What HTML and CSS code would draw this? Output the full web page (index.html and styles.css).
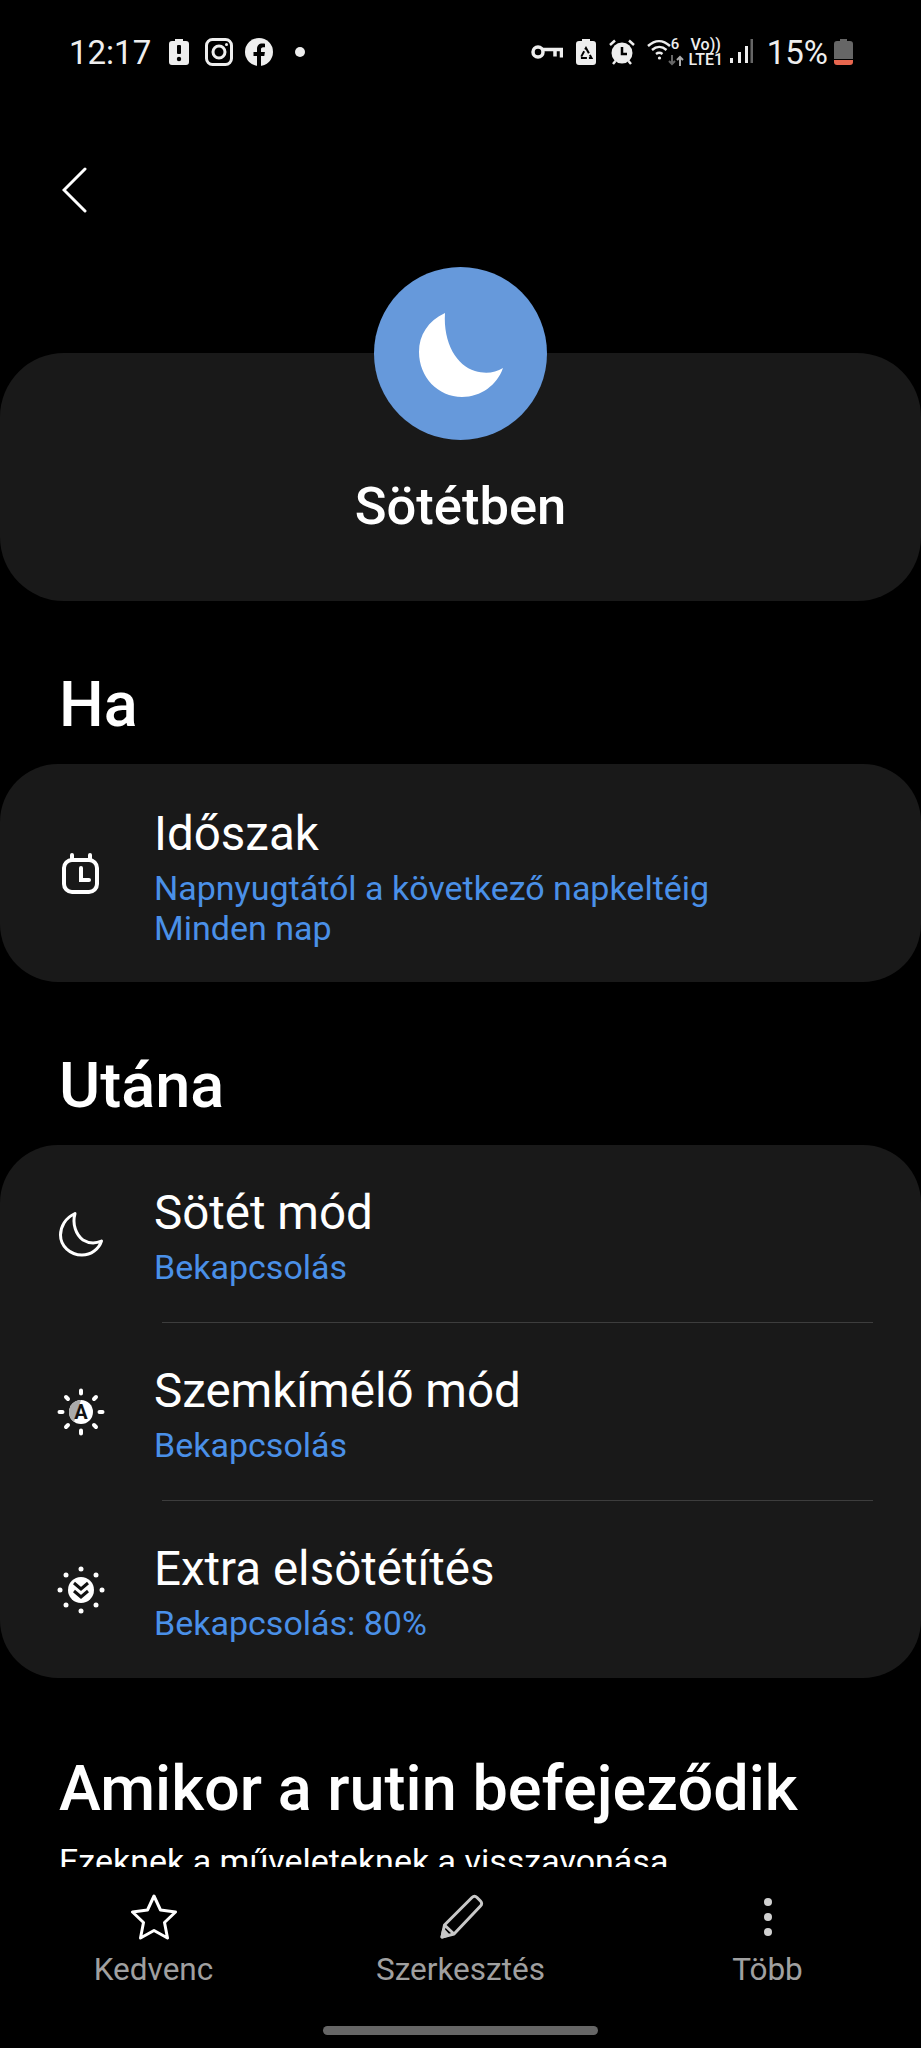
FILE: index.html
```html
<!DOCTYPE html>
<html lang="hu">
<head>
    <meta charset="UTF-8">
    <title>Sötétben</title>
    <link rel="stylesheet" href="styles.css">
</head>

<body>
<div class="phone">
    <!--status bar-->
    <div class="status">
        <div class="status-left">
            <span class="time">12:17</span>
            <svg class="ic-batt" width="20" height="26" viewBox="0 0 20 26"><path fill="#eee" d="M6 0h8v2h3a3 3 0 0 1 3 3v18a3 3 0 0 1-3 3H3a3 3 0 0 1-3-3V5a3 3 0 0 1 3-3h3z"/><rect x="8" y="6" width="4" height="9" rx="1" fill="#000"/><circle cx="10" cy="20" r="2.2" fill="#000"/></svg>
            <svg class="ic-insta" width="28" height="28" viewBox="0 0 28 28" fill="none" stroke="#eee" stroke-width="3"><rect x="1.5" y="1.5" width="25" height="25" rx="6"/><circle cx="14" cy="14" r="6"/><circle cx="21.5" cy="6.5" r="1.5" fill="#eee" stroke="none"/></svg>
            <svg class="ic-fb" width="28" height="28" viewBox="0 0 28 28"><circle cx="14" cy="14" r="14" fill="#eee"/><path fill="#000" d="M12 28V18H8.500v-4H12v-3c0-3.500 2-5.500 5.200-5.500 1.300 0 2.800.2 2.800.2v3.500h-1.700c-1.800 0-2.300 1-2.300 2.200V14h3.900l-.6 4H16v10z"/></svg>
            <span class="dot"></span>
        </div>
        <div class="status-right">
            <svg width="32" height="16" viewBox="0 0 32 16" fill="none" stroke="#eee" stroke-width="3.500"><circle cx="7" cy="8" r="5"/><path d="M12 5.500h18.500v8M24 5.500v7"/></svg>
            <svg class="ic-recycle" width="20" height="26" viewBox="0 0 20 26"><path fill="#eee" d="M6 0h8v2h3a3 3 0 0 1 3 3v18a3 3 0 0 1-3 3H3a3 3 0 0 1-3-3V5a3 3 0 0 1 3-3h3z"/><path fill="none" stroke="#000" stroke-width="2" stroke-dasharray="6 2" d="M10 9l5.500 10h-11z"/></svg>
            <svg class="ic-alarm" width="26" height="26" viewBox="0 0 26 26"><circle cx="13" cy="14" r="10.500" fill="#eee"/><path fill="none" stroke="#eee" stroke-width="2.500" d="M1 6l5-4.500M25 6l-5-4.500M4 25l2.500-3M22 25l-2.500-3"/><path fill="none" stroke="#000" stroke-width="2.500" d="M13 8v7h5"/></svg>
            <span class="wifi">
                <svg width="26" height="24" viewBox="0 0 26 24" fill="none" stroke="#eee" stroke-width="2.400"><path d="M1 9c7-6.500 15-6.500 22 0M5 13c4.500-4 10-4 14.500 0M9 17c2-1.500 4.500-1.500 6.500 0"/><circle cx="12.500" cy="21" r="1.600" fill="#eee" stroke="none"/></svg>
                <span class="wifi-six">6</span>
                <svg class="wifi-arrows" width="16" height="11" viewBox="0 0 16 11" fill="none" stroke-width="2"><path stroke="#666" d="M4 0v9M1 6l3 3 3-3"/><path stroke="#aaa" d="M12 11V2M9 5l3-3 3 3"/></svg>
            </span>
            <span class="volte"><span>Vo))</span><span>LTE1</span></span>
            <svg class="ic-signal" width="24" height="26" viewBox="0 0 24 26"><rect x="1" y="19" width="3" height="5" fill="#eee"/><rect x="9" y="13" width="3" height="11" fill="#eee"/><rect x="16" y="7" width="3" height="17" fill="#eee"/><rect x="21.500" y="0" width="2.500" height="24" fill="#666"/></svg>
            <span class="pct">15%</span>
            <svg class="ic-level" width="19" height="26" viewBox="0 0 19 26"><path fill="#666" d="M6 0h7v2h3a3 3 0 0 1 3 3v15H0V5a3 3 0 0 1 3-3h3z"/><path fill="#e8674f" d="M0 21h19v2a3 3 0 0 1-3 3H3a3 3 0 0 1-3-3z"/></svg>
        </div>
    </div>

    <div class="content">
        <div class="back">
            <svg width="26" height="46" viewBox="0 0 26 46" fill="none" stroke="#fff" stroke-width="3" stroke-linecap="round"><path d="M23 2L2 23l21 21"/></svg>
        </div>

        <div class="hero">
            <div class="hero-circle">
                <svg class="hero-moon" width="84" height="84" viewBox="0 0 84 84"><path fill="#fff" d="M26 0C9 8 0 22 0 39c0 25 19 45 43 45 19 0 35-12 41-29-8 5-18 6-28 3C38 53 24 30 26 0z"/></svg>
            </div>
            <div class="hero-title">Sötétben</div>
        </div>

        <h2 class="section-title">Ha</h2>
        <div class="card">
            <div class="row row-single">
                <svg class="row-icon" width="48" height="48" viewBox="0 0 48 48" fill="none" stroke="#fff" stroke-width="4" stroke-linecap="round"><rect x="7" y="11" width="33" height="32" rx="8"/><path d="M15 6v4M33 6v4"/><path d="M24 19v12h8"/></svg>
                <div class="row-text row-text-single">
                    <div class="row-title">Időszak</div>
                    <div class="row-sub">Napnyugtától a következő napkeltéig</div>
                    <div class="row-sub">Minden nap</div>
                </div>
            </div>
        </div>

        <h2 class="section-title section-title-2">Utána</h2>
        <div class="card">
            <div class="row">
                <svg class="row-icon" width="48" height="48" viewBox="0 0 48 48" fill="none" stroke="#fff" stroke-width="3" stroke-linejoin="round"><path d="M18 3.500C8 8 3.500 17 3.500 25c0 11 9.500 20 21.500 20 9 0 17-6 19.500-14-6.500 3-13.500 2-18.500-1C19 25 15 14 18 3.500z"/></svg>
                <div class="row-text">
                    <div class="row-title">Sötét mód</div>
                    <div class="row-sub">Bekapcsolás</div>
                </div>
            </div>
            <div class="sep"></div>
            <div class="row">
                <svg class="row-icon" width="48" height="48" viewBox="0 0 48 48"><g stroke="#fff" stroke-width="4" stroke-linecap="round"><path d="M24 2.500v3M24 42.500v3M2.500 24h3M42.500 24h3M9 9l2 2M37 37l2 2M9 39l2-2M37 11l2-2"/></g><circle cx="24" cy="24" r="12" fill="#fff"/><path fill="#aaa" d="M24 12a12 12 0 0 0-12 12 12 12 0 0 0 5 10z"/><text class="icon-letter" x="24" y="31" text-anchor="middle">A</text></svg>
                <div class="row-text">
                    <div class="row-title">Szemkímélő mód</div>
                    <div class="row-sub">Bekapcsolás</div>
                </div>
            </div>
            <div class="sep"></div>
            <div class="row">
                <svg class="row-icon" width="48" height="48" viewBox="0 0 48 48"><g fill="#fff"><circle cx="24" cy="3" r="2.500"/><circle cx="24" cy="45" r="2.500"/><circle cx="3" cy="24" r="2.500"/><circle cx="45" cy="24" r="2.500"/><circle cx="9" cy="9" r="2.500"/><circle cx="39" cy="9" r="2.500"/><circle cx="9" cy="39" r="2.500"/><circle cx="39" cy="39" r="2.500"/><circle cx="24" cy="24" r="13"/></g><path fill="none" stroke="#111" stroke-width="3" d="M17 17l7 6 7-6M17 25l7 6 7-6"/></svg>
                <div class="row-text">
                    <div class="row-title">Extra elsötétítés</div>
                    <div class="row-sub">Bekapcsolás: 80%</div>
                </div>
            </div>
        </div>

        <h2 class="section-title section-title-3">Amikor a rutin befejeződik</h2>
        <div class="section-note">Ezeknek a műveleteknek a visszavonása</div>
    </div>

    <!--bottom nav-->
    <div class="nav">
        <div class="nav-item">
            <svg width="46" height="46" viewBox="0 0 46 46" fill="none" stroke="#fff" stroke-width="3" stroke-linejoin="round"><path d="M23 2l6.500 14 15 2-11 10.500 3 15.500L23 36.500 9.500 44l3-15.500L1.500 18l15-2z"/></svg>
            <span class="nav-label">Kedvenc</span>
        </div>
        <div class="nav-item">
            <svg width="46" height="46" viewBox="0 0 46 46" fill="none" stroke="#c8c8c8" stroke-width="3" stroke-linejoin="round"><path d="M34 3.500c1.500-1.500 3.500-1.500 5 0l3.500 3.500c1.500 1.500 1.500 3.500 0 5L16 40l-12 3 2.500-12zM6.500 31L16 40"/><path fill="#c8c8c8" d="M5.500 36l4.500 5-6 2z"/></svg>
            <span class="nav-label">Szerkesztés</span>
        </div>
        <div class="nav-item">
            <svg width="46" height="46" viewBox="0 0 46 46" fill="#d0d0d0"><circle cx="23" cy="8" r="4"/><circle cx="23" cy="23" r="4"/><circle cx="23" cy="38" r="4"/></svg>
            <span class="nav-label">Több</span>
        </div>
    </div>
    <div class="handle-wrap"><div class="handle"></div></div>
</div>
</body>
</html>
```

FILE: styles.css
```css
body,
h2 {
    margin: 0;
    padding: 0;
}
body {
    background: #000;
    color: #fff;
    font-family: Roboto, "Noto Sans", sans-serif;
}
.phone {
    width: 921px;
    height: 2048px;
    overflow: hidden;
    display: flex;
    flex-direction: column;
}

/* status bar */
.status {
    height: 104px;
    flex: none;
    display: flex;
    justify-content: space-between;
    align-items: center;
    padding: 0 68px 0 69px;
    color: #eee;
}
.status-left,
.status-right {
    display: flex;
    align-items: center;
}
.time {
    font-size: 33px;
    width: 100px;
}
.ic-insta {
    margin-left: 16px;
}
.ic-fb {
    margin-left: 12px;
}
.dot {
    width: 10px;
    height: 10px;
    border-radius: 50%;
    background: #eee;
    margin-left: 22px;
}
.ic-recycle {
    margin-left: 13px;
}
.ic-alarm {
    margin-left: 13px;
}
.wifi {
    position: relative;
    width: 37px;
    height: 30px;
    margin-left: 12px;
}
.wifi-six {
    position: absolute;
    left: 24px;
    top: -2px;
    font-size: 15px;
    font-weight: 500;
}
.wifi-arrows {
    position: absolute;
    left: 21px;
    top: 18px;
}
.volte {
    display: flex;
    flex-direction: column;
    align-items: center;
    width: 34px;
    margin-left: 5px;
    font-size: 16px;
    line-height: 15px;
    font-weight: 500;
}
.ic-signal {
    margin-left: 6px;
}
.pct {
    font-size: 33px;
    margin-left: 14px;
}
.ic-level {
    margin-left: 6px;
}

/* scrolling part, cut off above the nav */
.content {
    height: 1763px;
    flex: none;
    overflow: hidden;
}
.back {
    height: 163px;
    padding: 63px 0 0 62px;
    box-sizing: border-box;
}

.hero {
    margin-top: 86px;
    height: 248px;
    background: #191919;
    border-radius: 64px;
    display: flex;
    flex-direction: column;
    align-items: center;
}
.hero-circle {
    width: 173px;
    height: 173px;
    margin-top: -86px;
    flex: none;
    border-radius: 50%;
    background: #6699db;
    display: flex;
    align-items: center;
    justify-content: center;
}
.hero-moon {
    margin-top: 2px;
}
.hero-title {
    font-size: 52.5px;
    font-weight: 500;
    margin-top: 36px;
    line-height: 60px;
}

.section-title {
    font-size: 63px;
    font-weight: 500;
    line-height: 70px;
    padding-left: 59px;
    margin-top: 69px;
    margin-bottom: 24px;
}
.section-title-2 {
    margin-top: 69px;
    margin-bottom: 24px;
}
.section-title-3 {
    margin-top: 76px;
    margin-bottom: 0;
}
.section-note {
    font-size: 34px;
    line-height: 40px;
    padding-left: 59px;
    margin-top: 17px;
}

.card {
    background: #191919;
    border-radius: 58px;
}
.row {
    height: 177px;
    display: flex;
    align-items: center;
    padding-left: 57px;
}
.row-single {
    height: 218px;
}
.row-icon {
    flex: none;
    margin-right: 49px;
}
.icon-letter {
    font-family: Roboto, sans-serif;
    font-size: 20px;
    font-weight: 700;
    fill: #111;
}
.row-text-single {
    padding-top: 4px;
}
.row-title {
    font-size: 47.5px;
    line-height: 65px;
    margin-bottom: 1px;
}
.row-sub {
    font-size: 34px;
    line-height: 40px;
    color: #4a90e8;
}
.sep {
    height: 1px;
    background: #3d3d3d;
    margin: 0 48px 0 162px;
}

/* bottom nav */
.nav {
    flex: none;
    height: 159px;
    box-sizing: border-box;
    display: grid;
    grid-template-columns: 1fr 1fr 1fr;
    padding-top: 27px;
}
.nav-item {
    display: flex;
    flex-direction: column;
    align-items: center;
}
.nav-label {
    font-size: 31.5px;
    line-height: 40px;
    color: #a0a0a0;
    margin-top: 10px;
}
.handle-wrap {
    display: flex;
    justify-content: center;
}
.handle {
    width: 275px;
    height: 9px;
    border-radius: 5px;
    background: #666;
}
```
